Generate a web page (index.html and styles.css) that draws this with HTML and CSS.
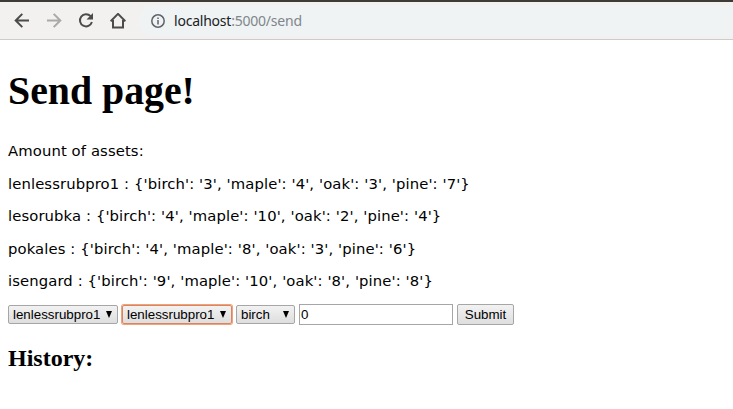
FILE: index.html
```html
<!DOCTYPE html>
<html lang="en">
<head>
<meta charset="utf-8">
<title>Send page</title>
<link rel="stylesheet" href="styles.css">
</head>
<body>
<header class="toolbar">
  <svg class="nav" viewBox="0 0 16 16"><path d="M15 7.5H2M8.3.9 1.7 7.5l6.6 6.6"/></svg>
  <svg class="nav disabled" viewBox="0 0 16 16"><path d="M1 7.5h13M7.7.9l6.6 6.6-6.6 6.6"/></svg>
  <svg class="nav" viewBox="0 0 16 16"><path d="M12.6 3.2A6.1 6.1 0 1 0 13.9 9"/><path class="solid" d="M15 0v6.5H8.5z"/></svg>
  <svg class="nav home" viewBox="0 0 16 16"><path d="M.6 8.2 8 .9l7.4 7.3M3 7v7.5h10V7"/></svg>
  <div class="address">
    <svg class="info" viewBox="0 0 14 14"><circle cx="7" cy="7" r="6.2"/><path d="M7 6v4.5M7 3.4v1.6"/></svg>
    <span class="url">localhost<span class="path">:5000/send</span></span>
  </div>
</header>
<main>
  <h1>Send page!</h1>
  <p>Amount of assets:</p>
  <p>lenlessrubpro1 : {'birch': '3', 'maple': '4', 'oak': '3', 'pine': '7'}</p>
  <p>lesorubka : {'birch': '4', 'maple': '10', 'oak': '2', 'pine': '4'}</p>
  <p>pokales : {'birch': '4', 'maple': '8', 'oak': '3', 'pine': '6'}</p>
  <p>isengard : {'birch': '9', 'maple': '10', 'oak': '8', 'pine': '8'}</p>
  <form>
    <div class="select"><select><option>lenlessrubpro1</option></select><svg viewBox="0 0 6 7"><path d="M0 0h6L3 7z"/></svg></div>
    <div class="select active"><select><option>lenlessrubpro1</option></select><svg viewBox="0 0 6 7"><path d="M0 0h6L3 7z"/></svg></div>
    <div class="select short"><select><option>birch</option></select><svg viewBox="0 0 6 7"><path d="M0 0h6L3 7z"/></svg></div>
    <input type="text" value="0">
    <button type="button">Submit</button>
  </form>
  <h2>History:</h2>
</main>
</body>
</html>
```
FILE: styles.css
```css
* { box-sizing: border-box; }
body { margin: 0; background: #fff; color: #000; overflow: hidden; }
.toolbar {
  display: flex;
  align-items: center;
  height: 40px;
  padding-left: 14px;
  background: #f2f1f0;
  border-top: 2px solid #3e3b36;
  border-bottom: 1px solid #ccc;
}
.nav {
  width: 16px;
  height: 16px;
  margin-right: 16px;
  fill: none;
  stroke: #4b4b4b;
  stroke-width: 2;
}
.nav.disabled { stroke: #aaa9a8; }
.nav .solid { fill: #4b4b4b; stroke: none; }
.nav.home { margin-right: 13px; }
.address {
  display: flex;
  flex: 1;
  align-items: center;
  height: 30px;
  padding-left: 12px;
  border-radius: 15px 0 0 15px;
  background: #eff3f4;
}
.info {
  width: 14px;
  height: 14px;
  margin-right: 9px;
  fill: none;
  stroke: #5f6368;
  stroke-width: 1.5;
}
.url { font: 14px/20px "Noto Sans", sans-serif; letter-spacing: -0.22px; color: #202124; }
.path { color: #80868b; }
main { padding: 0 8px; }
h1 { margin: 28px 0; font: bold 39.8px/46px "Liberation Serif", serif; }
p { margin: 0 0 15.6px; font: 14.8px/17px "DejaVu Sans", sans-serif; letter-spacing: 0.11px; }
form { display: flex; align-items: center; gap: 4px; height: 21px; margin-top: -1px; }
.select { position: relative; width: 110px; height: 19px; }
.select.short { width: 59px; }
select, input, button {
  display: block;
  margin: 0;
  font: 13.33px/15px "Liberation Sans", sans-serif;
  color: #000;
}
select {
  appearance: none;
  width: 100%;
  height: 100%;
  padding: 0 0 0 4px;
  border: 1px solid #a6a6a6;
  border-radius: 2px;
  background: linear-gradient(#f2f2f2, #dedede);
}
.active select { border-color: #d78660; box-shadow: 0 0 0 1px #f4a17a; }
.select svg { position: absolute; top: 6px; right: 6px; width: 6px; height: 7px; }
input { width: 154px; height: 21px; padding: 0 1px; border: 1px solid #a6a6a6; }
button {
  width: 57px;
  height: 21px;
  padding: 0;
  border: 1px solid #a6a6a6;
  border-radius: 2px;
  background: linear-gradient(#f2f2f2, #dedede);
}
h2 { margin: 20px 0 0; font: bold 24px/27px "Liberation Serif", serif; }
```
